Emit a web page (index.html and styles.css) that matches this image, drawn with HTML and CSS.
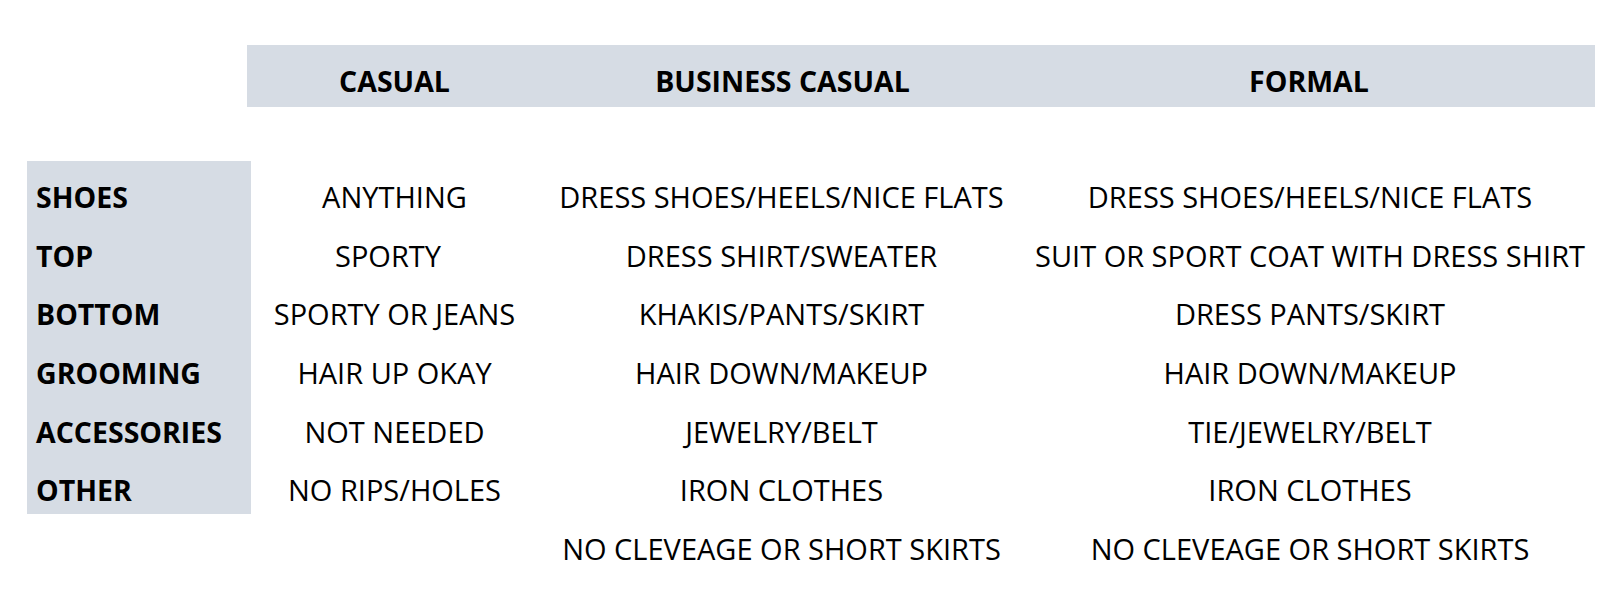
FILE: index.html
```html
<!DOCTYPE html>
<html lang="en">
<head>
<meta charset="utf-8">
<title>Dress Code</title>
<link rel="stylesheet" href="styles.css">
</head>
<body>
<div class="page">
  <div class="header">
    <div class="hcell">CASUAL</div>
    <div class="hcell">BUSINESS CASUAL</div>
    <div class="hcell">FORMAL</div>
  </div>
  <div class="table">
    <div class="labelbar"></div>
    <div class="label r1">SHOES</div>
    <div class="cell r1 c2">ANYTHING</div>
    <div class="cell r1 c3">DRESS SHOES/HEELS/NICE FLATS</div>
    <div class="cell r1 c4">DRESS SHOES/HEELS/NICE FLATS</div>

    <div class="label r2">TOP</div>
    <div class="cell r2 c2 shift">SPORTY</div>
    <div class="cell r2 c3">DRESS SHIRT/SWEATER</div>
    <div class="cell r2 c4">SUIT OR SPORT COAT WITH DRESS SHIRT</div>

    <div class="label r3">BOTTOM</div>
    <div class="cell r3 c2">SPORTY OR JEANS</div>
    <div class="cell r3 c3">KHAKIS/PANTS/SKIRT</div>
    <div class="cell r3 c4">DRESS PANTS/SKIRT</div>

    <div class="label r4">GROOMING</div>
    <div class="cell r4 c2">HAIR UP OKAY</div>
    <div class="cell r4 c3">HAIR DOWN/MAKEUP</div>
    <div class="cell r4 c4">HAIR DOWN/MAKEUP</div>

    <div class="label r5">ACCESSORIES</div>
    <div class="cell r5 c2">NOT NEEDED</div>
    <div class="cell r5 c3">JEWELRY/BELT</div>
    <div class="cell r5 c4">TIE/JEWELRY/BELT</div>

    <div class="label r6">OTHER</div>
    <div class="cell r6 c2">NO RIPS/HOLES</div>
    <div class="cell r6 c3">IRON CLOTHES</div>
    <div class="cell r6 c4">IRON CLOTHES</div>

    <div class="cell r7 c3">NO CLEVEAGE OR SHORT SKIRTS</div>
    <div class="cell r7 c4">NO CLEVEAGE OR SHORT SKIRTS</div>
  </div>
</div>
</body>
</html>
```
FILE: styles.css
```css
html, body {
  margin: 0;
  padding: 0;
  background: #ffffff;
}
body {
  font-family: "Open Sans", "Noto Sans", "Liberation Sans", sans-serif;
  color: #000000;
  font-size: 28.5px;
}
.page {
  padding-top: 45px;
}
.header {
  margin-left: 247px;
  width: 1348px;
  height: 61.7px;
  background: #d6dce4;
  display: grid;
  grid-template-columns: 295px 481px 572px;
}
.hcell {
  font-weight: bold;
  text-align: center;
  line-height: 50px;
  padding-top: 11px;
}
.table {
  margin-left: 27px;
  margin-top: 54px;
  display: grid;
  grid-template-columns: 224px 287px 487px 570px;
  grid-template-rows: 7.5px repeat(7, 58.6px);
}
.labelbar {
  grid-column: 1;
  grid-row: 1 / 8;
  background: #d6dce4;
  margin-bottom: 5.5px;
}
.label {
  grid-column: 1;
  font-weight: bold;
  padding-left: 9px;
  line-height: 58.6px;
  white-space: nowrap;
}
.cell {
  text-align: center;
  font-size: 29px;
  line-height: 58.6px;
  white-space: nowrap;
}
.shift { padding-right: 13px; }
.r1 { grid-row: 2; }
.r2 { grid-row: 3; }
.r3 { grid-row: 4; }
.r4 { grid-row: 5; }
.r5 { grid-row: 6; }
.r6 { grid-row: 7; }
.r7 { grid-row: 8; }
.c2 { grid-column: 2; }
.c3 { grid-column: 3; }
.c4 { grid-column: 4; }
```
